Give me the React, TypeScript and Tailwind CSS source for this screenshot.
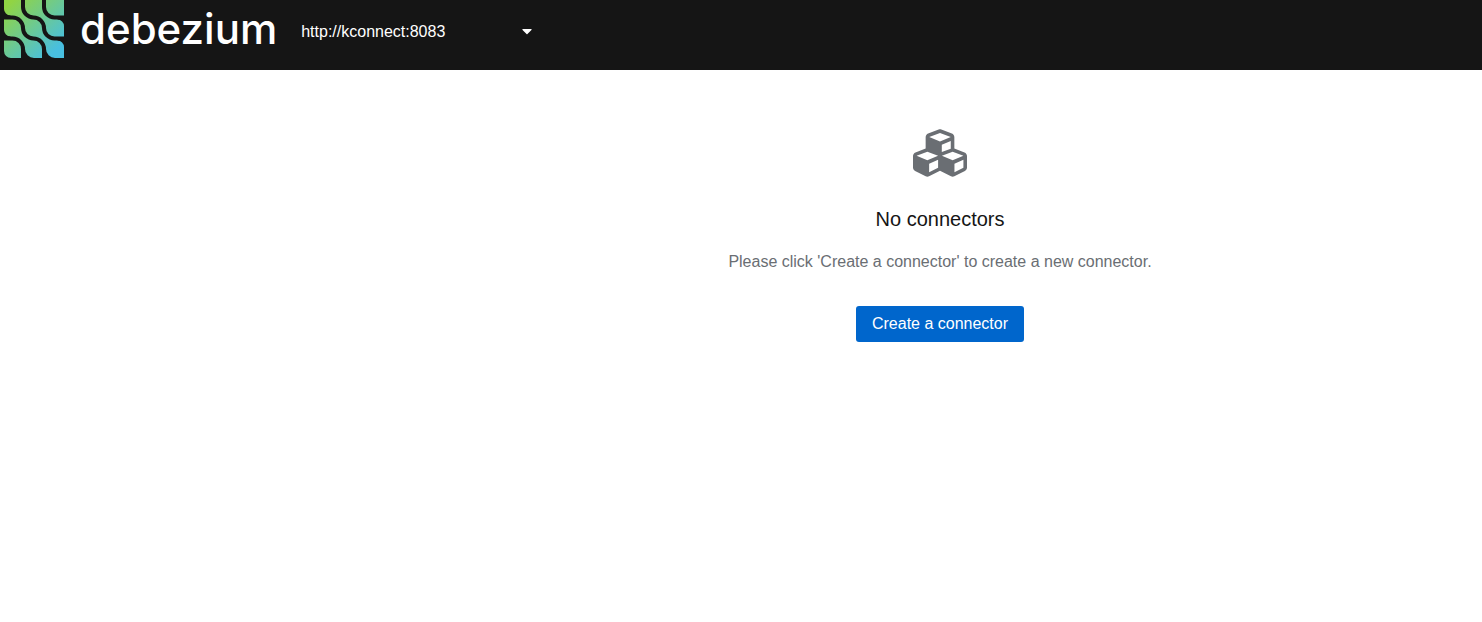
import { FaCaretDown, FaCubes } from "react-icons/fa";

function LogoMark() {
  return (
    <svg className="block h-[58px] w-[60px] shrink-0" viewBox="0 0 60 58" aria-hidden="true">
      <defs>
        <linearGradient id="mark" gradientUnits="userSpaceOnUse" x1="7" y1="2" x2="52" y2="50">
          <stop offset="0" stopColor="#91d443" />
          <stop offset="1" stopColor="#48bfe0" />
        </linearGradient>
      </defs>
      <path d="M0-3H60V58H0Z" fill="url(#mark)" />
      <g fill="none" stroke="#151515" strokeWidth="4">
        <path d="M40-4V7A10.500 10.500 0 0 0 50.500 17.500H61" />
        <path d="M19-4V7A10.500 10.500 0 0 0 29.500 17.500A10.500 10.500 0 0 1 40 28A10.500 10.500 0 0 0 50.500 38.500H61" />
        <path d="M-1 17.500H8.500A10.500 10.500 0 0 1 19 28A10.500 10.500 0 0 0 29.500 38.500A10.500 10.500 0 0 1 40 49V60" />
        <path d="M-1 38.500H8.500A10.500 10.500 0 0 1 19 49V60" />
      </g>
      <g fill="#151515">
        <path d="M0 9A6.500 6.500 0 0 0 6.500 15.500V17H-1V9Z" />
        <path d="M0 30A6.500 6.500 0 0 0 6.500 36.500V38H-1V30Z" />
        <path d="M0 51A7 7 0 0 0 7 58V59H-1V51Z" />
        <path d="M21 49A9 9 0 0 0 30 58V59H20V49Z" />
        <path d="M42 49A9 9 0 0 0 51 58V59H41V49Z" />
        <path d="M60 26A6.500 6.500 0 0 0 53.500 19.500V18H61V26Z" />
        <path d="M60 47A6.500 6.500 0 0 0 53.500 40.500V39H61V47Z" />
      </g>
    </svg>
  );
}

export default function App() {
  return (
    <div className="min-h-screen bg-white font-['Liberation_Sans',Arial,sans-serif] text-base text-[#151515]">
      <header className="flex h-[70px] items-start bg-[#151515] pl-1 text-white">
        <a href="#" aria-label="debezium" className="flex items-start gap-4">
          <LogoMark />
          <span className="font-['Inter',sans-serif] text-[42px] leading-[58px] font-medium">debezium</span>
        </a>
        <div className="relative mt-[14px] ml-4 w-[248px]">
          <select
            aria-label="Kafka Connect cluster"
            className="h-9 w-full appearance-none bg-transparent px-2 text-base text-white"
          >
            <option>http://kconnect:8083</option>
          </select>
          <FaCaretDown className="pointer-events-none absolute top-[9px] right-[6px] size-4" aria-hidden="true" />
        </div>
      </header>
      <main className="py-6 pl-[398px]">
        <section className="flex flex-col items-center px-8 py-8 text-center">
          <FaCubes className="mb-6 size-[54px] text-[#6a6e73]" aria-hidden="true" />
          <h1 className="text-xl leading-[30px]">No connectors</h1>
          <p className="mt-4 leading-6 text-[#6a6e73]">
            Please click 'Create a connector' to create a new connector.
          </p>
          <button type="button" className="mt-8 rounded-[3px] bg-[#0066cc] px-4 py-1.5 leading-6 text-white">
            Create a connector
          </button>
        </section>
      </main>
    </div>
  );
}
